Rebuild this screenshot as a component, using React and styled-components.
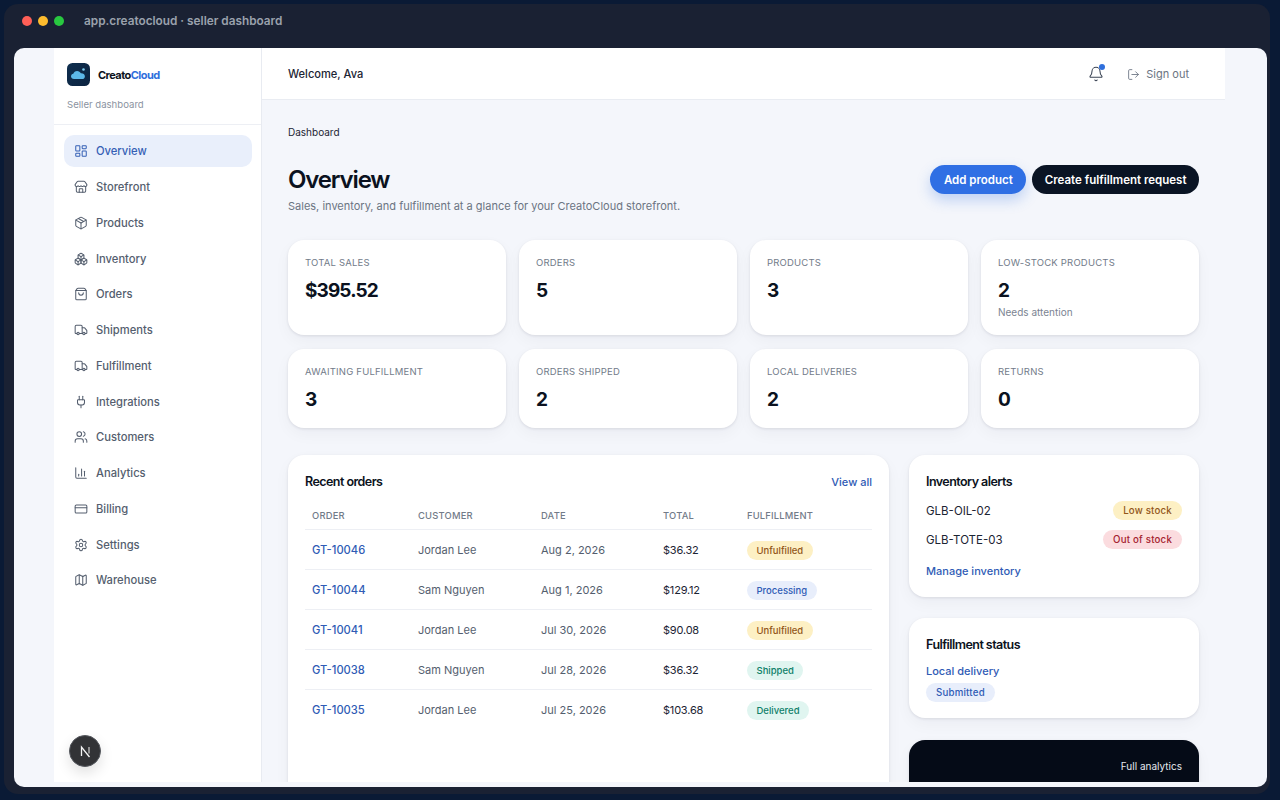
import React from 'react';
import styled, { createGlobalStyle } from 'styled-components';
import {
  LayoutDashboard,
  Store,
  Package,
  Boxes,
  ShoppingBag,
  Truck,
  Plug,
  Users,
  ChartColumn,
  CreditCard,
  Settings,
  Map as MapIcon,
  Bell,
  LogOut,
} from 'lucide-react';

const navItems = [
  { label: 'Overview', icon: LayoutDashboard, active: true },
  { label: 'Storefront', icon: Store },
  { label: 'Products', icon: Package },
  { label: 'Inventory', icon: Boxes },
  { label: 'Orders', icon: ShoppingBag },
  { label: 'Shipments', icon: Truck },
  { label: 'Fulfillment', icon: Truck },
  { label: 'Integrations', icon: Plug },
  { label: 'Customers', icon: Users },
  { label: 'Analytics', icon: ChartColumn },
  { label: 'Billing', icon: CreditCard },
  { label: 'Settings', icon: Settings },
  { label: 'Warehouse', icon: MapIcon },
];

const topStats = [
  { label: 'Total sales', value: '$395.52' },
  { label: 'Orders', value: '5' },
  { label: 'Products', value: '3' },
  { label: 'Low-stock products', value: '2', note: 'Needs attention' },
];

const bottomStats = [
  { label: 'Awaiting fulfillment', value: '3' },
  { label: 'Orders shipped', value: '2' },
  { label: 'Local deliveries', value: '2' },
  { label: 'Returns', value: '0' },
];

const orders = [
  { id: 'GT-10046', customer: 'Jordan Lee', date: 'Aug 2, 2026', total: '$36.32', status: 'Unfulfilled', tone: 'amber' },
  { id: 'GT-10044', customer: 'Sam Nguyen', date: 'Aug 1, 2026', total: '$129.12', status: 'Processing', tone: 'blue' },
  { id: 'GT-10041', customer: 'Jordan Lee', date: 'Jul 30, 2026', total: '$90.08', status: 'Unfulfilled', tone: 'amber' },
  { id: 'GT-10038', customer: 'Sam Nguyen', date: 'Jul 28, 2026', total: '$36.32', status: 'Shipped', tone: 'teal' },
  { id: 'GT-10035', customer: 'Jordan Lee', date: 'Jul 25, 2026', total: '$103.68', status: 'Delivered', tone: 'teal' },
];

const tones = {
  amber: { bg: '#fdf0c4', fg: '#92561a' },
  blue: { bg: '#e8eefb', fg: '#2f5bb5' },
  teal: { bg: '#e0f5f0', fg: '#0f8069' },
  red: { bg: '#fbdcdf', fg: '#a5222f' },
};

const Logo = () => (
  <svg width="23" height="23" viewBox="0 0 23 23">
    <defs>
      <linearGradient id="logoBg" x1="0" y1="0" x2="1" y2="1">
        <stop offset="0" stopColor="#0f2f4f" />
        <stop offset="1" stopColor="#0b2340" />
      </linearGradient>
    </defs>
    <rect width="23" height="23" rx="5.5" fill="url(#logoBg)" />
    <path
      d="M7 16c-1.8 0-3-1.2-3-2.7 0-1.4 1-2.4 2.3-2.6.5-1.7 2-2.8 3.8-2.8 1.7 0 3.1.9 3.8 2.4 1.9-.2 4 1 4 3.1 0 1.6-1.3 2.6-2.9 2.6z"
      fill="#5cb8e8"
    />
    <circle cx="16.5" cy="6.5" r="1.3" fill="#7fcdf0" />
  </svg>
);

const NextMark = () => (
  <svg width="13" height="13" viewBox="0 0 13 13" fill="none">
    <path d="M2.5 11V2l8 10" stroke="#f5f5f5" strokeWidth="1.3" />
    <path d="M10 2v6.5" stroke="#cfcfcf" strokeWidth="1.2" />
  </svg>
);

export default function App() {
  return (
    <>
      <GlobalStyle />
      <Desktop>
        <Window>
          <TitleBar>
            <Dot $color="#ff5f57" />
            <Dot $color="#febc2e" />
            <Dot $color="#28c840" />
            <TitleText>app.creatocloud · seller dashboard</TitleText>
          </TitleBar>
          <Viewport>
            <Page>
              <Sidebar>
                <Brand>
                  <BrandRow>
                    <Logo />
                    <BrandName>
                      Creato<span>Cloud</span>
                    </BrandName>
                  </BrandRow>
                  <BrandSub>Seller dashboard</BrandSub>
                </Brand>
                <Nav>
                  {navItems.map(({ label, icon: Icon, active }) => (
                    <NavItem key={label} $active={active}>
                      <Icon size={14} strokeWidth={1.75} />
                      {label}
                    </NavItem>
                  ))}
                </Nav>
              </Sidebar>
              <Column>
                <Header>
                  <Welcome>Welcome, Ava</Welcome>
                  <HeaderActions>
                    <BellWrap>
                      <Bell size={16} strokeWidth={1.6} />
                      <BellDot />
                    </BellWrap>
                    <SignOut>
                      <LogOut size={13} strokeWidth={1.6} />
                      Sign out
                    </SignOut>
                  </HeaderActions>
                </Header>
                <Main>
                  <Crumb>Dashboard</Crumb>
                  <TitleRow>
                    <div>
                      <PageTitle>Overview</PageTitle>
                      <Subtitle>
                        Sales, inventory, and fulfillment at a glance for your CreatoCloud storefront.
                      </Subtitle>
                    </div>
                    <Buttons>
                      <PrimaryButton>Add product</PrimaryButton>
                      <DarkButton>Create fulfillment request</DarkButton>
                    </Buttons>
                  </TitleRow>
                  <StatGrid $height={95}>
                    {topStats.map(s => (
                      <StatCard key={s.label}>
                        <StatLabel>{s.label}</StatLabel>
                        <StatValue>{s.value}</StatValue>
                        {s.note && <StatNote>{s.note}</StatNote>}
                      </StatCard>
                    ))}
                  </StatGrid>
                  <StatGrid $height={79}>
                    {bottomStats.map(s => (
                      <StatCard key={s.label}>
                        <StatLabel>{s.label}</StatLabel>
                        <StatValue>{s.value}</StatValue>
                      </StatCard>
                    ))}
                  </StatGrid>
                  <Lower>
                    <OrdersCard>
                      <CardHead>
                        <CardTitle>Recent orders</CardTitle>
                        <TextLink>View all</TextLink>
                      </CardHead>
                      <Table>
                        <thead>
                          <tr>
                            <th style={{ width: 106 }}>Order</th>
                            <th style={{ width: 123 }}>Customer</th>
                            <th style={{ width: 122 }}>Date</th>
                            <th style={{ width: 84 }}>Total</th>
                            <th>Fulfillment</th>
                          </tr>
                        </thead>
                        <tbody>
                          {orders.map(o => (
                            <tr key={o.id}>
                              <td>
                                <OrderLink>{o.id}</OrderLink>
                              </td>
                              <td>{o.customer}</td>
                              <td>{o.date}</td>
                              <TotalCell>{o.total}</TotalCell>
                              <td>
                                <Badge $tone={o.tone}>{o.status}</Badge>
                              </td>
                            </tr>
                          ))}
                        </tbody>
                      </Table>
                    </OrdersCard>
                    <Side>
                      <InventoryCard>
                        <CardTitle>Inventory alerts</CardTitle>
                        <AlertRow>
                          <Sku>GLB-OIL-02</Sku>
                          <WideBadge $tone="amber">Low stock</WideBadge>
                        </AlertRow>
                        <AlertRow>
                          <Sku>GLB-TOTE-03</Sku>
                          <WideBadge $tone="red">Out of stock</WideBadge>
                        </AlertRow>
                        <ManageLink>Manage inventory</ManageLink>
                      </InventoryCard>
                      <StatusCard>
                        <CardTitle>Fulfillment status</CardTitle>
                        <DeliveryLink>Local delivery</DeliveryLink>
                        <WideBadge $tone="blue">Submitted</WideBadge>
                      </StatusCard>
                      <DarkCard>
                        <DarkLink>Full analytics</DarkLink>
                      </DarkCard>
                    </Side>
                  </Lower>
                </Main>
              </Column>
            </Page>
            <DevBadge>
              <NextMark />
            </DevBadge>
          </Viewport>
        </Window>
      </Desktop>
    </>
  );
}

const sans = `'Inter', 'Liberation Sans', sans-serif`;

const GlobalStyle = createGlobalStyle`
  html, body {
    margin: 0;
    height: 100%;
    overflow: hidden;
    background: #0a1a35;
    font-family: ${sans};
  }
  * { box-sizing: border-box; }
`;

const Desktop = styled.div`
  width: 1280px;
  height: 800px;
  padding: 4px 10px 6px 4px;
  background: #0a1a35;
`;

const Window = styled.div`
  height: 100%;
  display: flex;
  flex-direction: column;
  padding: 0 3px 7px 10px;
  background: #1a2133;
  border-radius: 14px;
`;

const TitleBar = styled.div`
  height: 44px;
  flex: none;
  display: flex;
  align-items: center;
  gap: 6px;
  padding: 0 0 10px 8px;
`;

const Dot = styled.span`
  width: 10px;
  height: 10px;
  border-radius: 50%;
  background: ${p => p.$color};
`;

const TitleText = styled.span`
  margin-left: 14px;
  font-size: 11.8px;
  font-weight: 600;
  color: #9aa1ad;
`;

const Viewport = styled.div`
  position: relative;
  flex: 1;
  min-height: 0;
  padding-bottom: 5px;
  background: #f4f6fb;
  border-radius: 10px;
  overflow: hidden;
`;

const Page = styled.div`
  width: 1171px;
  height: 734px;
  margin-left: 40px;
  display: flex;
  overflow: hidden;
`;

const Sidebar = styled.aside`
  width: 208px;
  flex: none;
  background: #fff;
  border-right: 1px solid #e8ebf1;
`;

const Brand = styled.div`
  height: 77px;
  padding: 15px 13px 0;
  border-bottom: 1px solid #edeff4;
`;

const BrandRow = styled.div`
  display: flex;
  align-items: center;
  gap: 8px;
`;

const BrandName = styled.div`
  font-size: 11px;
  font-weight: 700;
  letter-spacing: -0.55px;
  color: #0b1220;

  span {
    color: #2f6fdc;
  }
`;

const BrandSub = styled.div`
  margin-top: 13px;
  font-size: 9.6px;
  color: #8b93a1;
`;

const Nav = styled.nav`
  display: flex;
  flex-direction: column;
  gap: 4px;
  padding: 10.4px 9px 0 10px;
`;

const NavItem = styled.a`
  height: 31.75px;
  display: flex;
  align-items: center;
  gap: 8px;
  padding: 0 10px;
  font-size: 11.2px;
  font-weight: 500;
  border-radius: 10px;
  color: ${p => (p.$active ? '#3560b5' : '#545e6e')};
  background: ${p => (p.$active ? '#e9effb' : 'transparent')};
`;

const Column = styled.div`
  flex: 1;
  min-width: 0;
  display: flex;
  flex-direction: column;
`;

const Header = styled.header`
  height: 52px;
  flex: none;
  display: flex;
  align-items: center;
  justify-content: space-between;
  padding: 1px 36px 0 26px;
  background: #fff;
  border-bottom: 1px solid #e9ecf2;
`;

const Welcome = styled.div`
  font-size: 11.1px;
  font-weight: 500;
  color: #1c2433;
`;

const HeaderActions = styled.div`
  display: flex;
  align-items: center;
  gap: 23px;
`;

const BellWrap = styled.div`
  position: relative;
  display: flex;
  color: #3a4454;
`;

const BellDot = styled.span`
  position: absolute;
  top: -2px;
  right: -1px;
  width: 6px;
  height: 6px;
  border-radius: 50%;
  background: #2f6fdc;
`;

const SignOut = styled.div`
  display: flex;
  align-items: center;
  gap: 6px;
  font-size: 11px;
  color: #6b7482;
`;

const Main = styled.main`
  padding: 26px 26px 0;
`;

const Crumb = styled.div`
  font-size: 10px;
  line-height: 13px;
  color: #1c2433;
`;

const TitleRow = styled.div`
  display: flex;
  justify-content: space-between;
  margin-top: 26px;
  margin-bottom: 26px;
`;

const PageTitle = styled.h1`
  margin: 0;
  font-size: 24px;
  line-height: 30px;
  font-weight: 600;
  letter-spacing: -1.15px;
  color: #0b1220;
`;

const Subtitle = styled.p`
  margin: 3px 0 0;
  font-size: 11px;
  line-height: 16px;
  color: #6b7482;
`;

const Buttons = styled.div`
  display: flex;
  gap: 6px;
`;

const PillButton = styled.button`
  height: 29px;
  border: 0;
  border-radius: 15px;
  font-family: inherit;
  font-size: 11.5px;
  font-weight: 600;
  color: #fff;
`;

const PrimaryButton = styled(PillButton)`
  padding: 0 13.5px;
  background: #2f6fe4;
  box-shadow: 0 6px 14px rgba(47, 111, 228, 0.28);
`;

const DarkButton = styled(PillButton)`
  padding: 0 12.5px;
  background: #0a1424;
`;

const StatGrid = styled.div`
  display: grid;
  grid-template-columns: repeat(4, 1fr);
  gap: 13px;
  height: ${p => p.$height}px;
  margin-bottom: 14px;
`;

const Card = styled.section`
  background: #fff;
  border-radius: 16px;
  box-shadow: 0 1px 3px rgba(15, 23, 42, 0.1), 0 6px 16px rgba(15, 23, 42, 0.04);
`;

const StatCard = styled(Card)`
  padding: 17px 17px 0;
`;

const StatLabel = styled.div`
  font-size: 9.5px;
  line-height: 12px;
  letter-spacing: 0.2px;
  text-transform: uppercase;
  color: #727b89;
`;

const StatValue = styled.div`
  margin-top: 9px;
  font-size: 19px;
  line-height: 26px;
  font-weight: 700;
  letter-spacing: -0.9px;
  color: #0b1220;
`;

const StatNote = styled.div`
  margin-top: 2px;
  font-size: 10px;
  color: #7b8492;
`;

const Lower = styled.div`
  display: grid;
  grid-template-columns: 601px 290px;
  gap: 20px;
  margin-top: 27px;
`;

const OrdersCard = styled(Card)`
  height: 420px;
  padding: 17px;
`;

const CardHead = styled.div`
  display: flex;
  align-items: center;
  justify-content: space-between;
`;

const CardTitle = styled.h2`
  margin: 0;
  padding-top: 1px;
  font-size: 12.5px;
  line-height: 18px;
  font-weight: 600;
  letter-spacing: -0.55px;
  color: #0b1220;
`;

const TextLink = styled.a`
  font-size: 11px;
  font-weight: 500;
  color: #2f5bb5;
`;

const Table = styled.table`
  width: 100%;
  margin-top: 12px;
  border-collapse: collapse;
  table-layout: fixed;
  font-size: 11px;

  th {
    height: 26px;
    padding: 0 7px;
    text-align: left;
    font-size: 9.4px;
    font-weight: 500;
    letter-spacing: 0.2px;
    text-transform: uppercase;
    color: #727b89;
    border-bottom: 1px solid #edeff4;
  }

  td {
    height: 40px;
    padding: 2px 7px 0;
    color: #545e6e;
    border-bottom: 1px solid #edeff4;
  }

  tbody tr:last-child td {
    border-bottom: 0;
  }
`;

const OrderLink = styled.a`
  font-size: 11.2px;
  font-weight: 500;
  color: #2f5bb5;
`;

const TotalCell = styled.td`
  && {
    color: #1c2433;
    letter-spacing: -0.2px;
  }
`;

const Badge = styled.span`
  display: inline-block;
  padding: 3px 9.5px;
  border-radius: 10px;
  font-size: 9.5px;
  line-height: 13px;
  font-weight: 500;
  color: ${p => tones[p.$tone].fg};
  background: ${p => tones[p.$tone].bg};
`;

const WideBadge = styled(Badge)`
  padding: 3px 10px;
  font-size: 9.7px;
  letter-spacing: 0.2px;
`;

const Side = styled.div`
  display: flex;
  flex-direction: column;
  gap: 21px;
`;

const InventoryCard = styled(Card)`
  height: 142px;
  padding: 17px;
`;

const AlertRow = styled.div`
  height: 29px;
  display: flex;
  align-items: center;
  justify-content: space-between;
  &:first-of-type {
    margin-top: 5px;
  }
`;

const Sku = styled.span`
  font-size: 11.5px;
  color: #1c2433;
`;

const ManageLink = styled(TextLink)`
  display: block;
  margin-top: 10px;
`;

const StatusCard = styled(Card)`
  height: 100px;
  padding: 17px;
`;

const DeliveryLink = styled(TextLink)`
  display: block;
  margin-top: 10px;
  margin-bottom: 2px;
`;

const DarkCard = styled(Card)`
  height: 120px;
  margin-top: 1px;
  padding: 14px 17px;
  text-align: right;
  background: #050b17;
`;

const DarkLink = styled.a`
  font-size: 10px;
  color: #e5e8ee;
`;

const DevBadge = styled.div`
  position: absolute;
  left: 55px;
  bottom: 20px;
  width: 32px;
  height: 32px;
  display: flex;
  align-items: center;
  justify-content: center;
  border-radius: 50%;
  border: 1px solid #55585e;
  background: #323336;
  box-shadow: 0 6px 14px rgba(0, 0, 0, 0.12);
`;
